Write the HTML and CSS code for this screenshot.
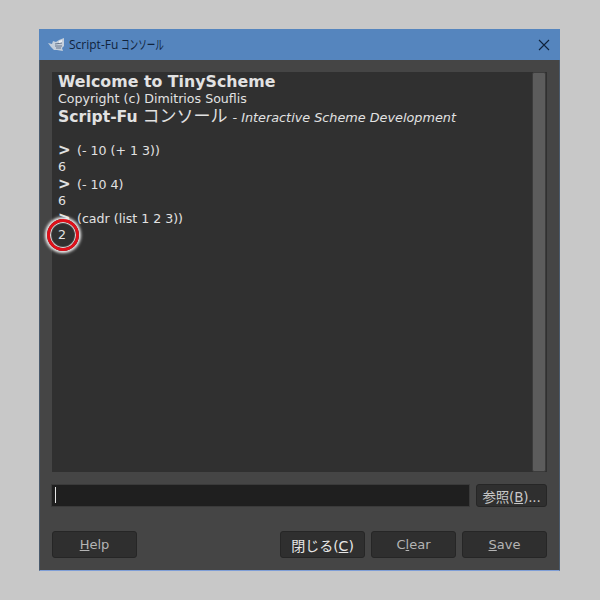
FILE: index.html
```html
<!DOCTYPE html>
<html lang="ja">
  <head>
    <meta charset="UTF-8" />
    <title>Script-Fu コンソール</title>
    <link rel="stylesheet" href="styles.css">
  </head>
  <body>
    <div class="window">
      <div class="titlebar">
        <svg class="app-icon" width="17" height="14" viewBox="0 0 17 14">
          <path d="M0 5 L4 6 L5 3 L8 4 L11 2 L16 0 L16 8 L14 10 L15 13 L9 12 L6 12 L3 9 Z" fill="#c4cfdc" />
          <path d="M7 6 L14 5 M7 8 L14 8 M8 10 L13 10" stroke="#66758a" stroke-width="1" />
          <path d="M11 3 L14 2 L14 4 L11 5 Z" fill="#eef2f6" />
        </svg>
        <span class="title">Script-Fu <span class="title-ja">コンソール</span></span>
        <svg class="close" width="12" height="12" viewBox="0 0 12 12">
          <path d="M1 1 L11 11 M11 1 L1 11" stroke="#10233c" stroke-width="1.1" />
        </svg>
      </div>
      <div class="content">
        <div class="console">
          <div class="output">
            <div class="line-big">Welcome to TinyScheme</div>
            <div class="line">Copyright (c) Dimitrios Souflis</div>
            <div class="line-sub"><b>Script-Fu</b> <span class="ja">コンソール</span> <i>- Interactive Scheme Development</i></div>
            <div class="spacer"></div>
            <div class="line cmd"><span class="prompt">&gt;</span>(- 10 (+ 1 3))</div>
            <div class="line">6</div>
            <div class="line cmd"><span class="prompt">&gt;</span>(- 10 4)</div>
            <div class="line">6</div>
            <div class="line cmd"><span class="prompt">&gt;</span>(cadr (list 1 2 3))</div>
            <div class="line">2</div>
          </div>
          <div class="scrollbar"></div>
          <div class="marker"></div>
        </div>
        <div class="entry-row">
          <div class="entry"><span class="cursor"></span></div>
          <button class="browse">参照(<u>B</u>)...</button>
        </div>
        <div class="actions">
          <button class="muted"><u>H</u>elp</button>
          <div class="actions-right">
            <button class="close-btn">閉じる(<u>C</u>)</button>
            <button class="muted">C<u>l</u>ear</button>
            <button class="muted"><u>S</u>ave</button>
          </div>
        </div>
      </div>
    </div>
  </body>
</html>
```

FILE: styles.css
```css
* {
  box-sizing: border-box;
}

body {
  margin: 0;
  height: 600px;
  padding: 29px 39px;
  background-color: #c8c8c8;
  font-family: "DejaVu Sans", "Noto Sans CJK JP", sans-serif;
  overflow: hidden;
}

.window {
  width: 521px;
  height: 542px;
  display: flex;
  flex-direction: column;
  background-color: #454545;
  border: 1px solid #4a5a6c;
  border-top: none;
  border-bottom-color: #7f9ed6;
}

.titlebar {
  height: 31px;
  margin: 0 -1px;
  display: flex;
  align-items: center;
  padding: 0 10px 0 9px;
  background-color: #5585be;
}

.app-icon {
  margin-right: 4px;
}

.title {
  flex: 1;
  font-family: "Open Sans", "Noto Sans CJK JP", sans-serif;
  font-size: 12px;
  color: #10233c;
}

.title-ja {
  display: inline-block;
  font-size: 13px;
  line-height: 1;
  transform: scaleX(0.66);
  transform-origin: left center;
}

.content {
  flex: 1;
  display: flex;
  flex-direction: column;
  padding: 12px;
}

.console {
  position: relative;
  height: 400px;
  display: flex;
  background-color: #303030;
  color: #e2e2e2;
}

.output {
  flex: 1;
  padding: 1px 6px;
}

.line-big {
  font-size: 15.8px;
  font-weight: bold;
  line-height: 18px;
}

.line {
  font-size: 12.6px;
  line-height: 15px;
  height: 17px;
}

.line.cmd {
  line-height: 17px;
}

.line-sub {
  font-size: 15.6px;
  line-height: 17px;
  height: 17px;
}

.line-sub .ja {
  font-size: 17px;
  line-height: 1;
}

.line-sub i {
  font-size: 12.8px;
}

.spacer {
  height: 17px;
}

.prompt {
  font-size: 15px;
  font-weight: bold;
  display: inline-block;
  width: 19px;
  line-height: 1;
}

.scrollbar {
  width: 14px;
  margin-right: 1px;
  background-color: #5c5c5c;
  border: 1px solid #3c3c3c;
  border-radius: 2px;
}

.marker {
  position: absolute;
  left: -5px;
  top: 147px;
  width: 32px;
  height: 32px;
  border-radius: 50%;
  border: 3.5px solid #e0101a;
  box-shadow: 0 0 3px 2px #f2f2f2, inset 0 0 1px 1px #f2f2f2;
}

.entry-row {
  display: flex;
  align-items: center;
  gap: 7px;
  margin-top: 12px;
}

.entry {
  flex: 1;
  height: 21px;
  padding: 2px 3px;
  background-color: #1f1f1f;
  box-shadow: 0 0 0 1px #3a3a3a;
}

.cursor {
  display: block;
  width: 1px;
  height: 16px;
  background-color: #e6e6e6;
}

button {
  height: 27px;
  width: 85px;
  padding: 0;
  border: 1px solid #262626;
  border-radius: 3px;
  background-color: #2f2f2f;
  color: #e6e6e6;
  font-family: "DejaVu Sans", "Noto Sans CJK JP", sans-serif;
  font-size: 13px;
}

button.muted {
  color: #b4b4b4;
}

button.close-btn {
  font-size: 14px;
}

button.browse {
  width: 71px;
  height: 23px;
  font-size: 13.5px;
  letter-spacing: -0.2px;
  color: #c8c8c8;
}

.actions {
  display: flex;
  justify-content: space-between;
  margin-top: 24px;
}

.actions-right {
  display: flex;
  gap: 6px;
}
```
